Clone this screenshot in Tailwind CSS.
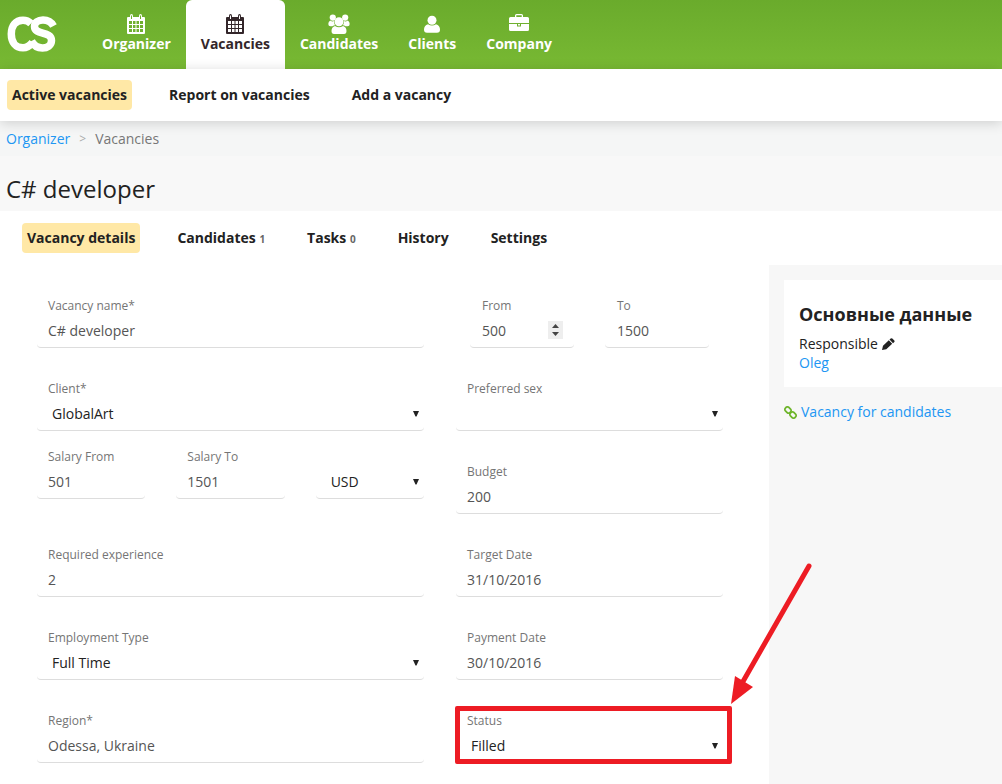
<!DOCTYPE html>
<html lang="en">
<head>
<meta charset="utf-8">
<meta name="viewport" content="width=device-width, initial-scale=1">
<title>C# developer</title>
<script src="https://cdn.jsdelivr.net/npm/@tailwindcss/browser@4"></script>
</head>
<body class="flex min-h-screen flex-col bg-white font-['Open_Sans',sans-serif] text-sm text-[#222]">

<svg class="hidden" aria-hidden="true">
  <symbol id="calendar" viewBox="0 0 18 20">
    <path fill="currentColor" fill-rule="evenodd" d="M1 3H3V2Q3 0 4.500 0T6 2V3h6V2Q12 0 13.500 0T15 2V3h2q1 0 1 1V19q0 1-1 1H1q-1 0-1-1V4Q0 3 1 3ZM4 1.500V5H5V1.500ZM13 1.500V5h1V1.500ZM2 7h3v3H2ZM6 7h2.500v3H6ZM9.500 7H12v3H9.500ZM13 7h3v3H13ZM2 11h3v3H2ZM6 11h2.500v3H6ZM9.500 11H12v3H9.500ZM13 11h3v3H13ZM2 15h3v3H2ZM6 15h2.500v3H6ZM9.500 15H12v3H9.500ZM13 15h3v3H13Z"/>
  </symbol>
  <symbol id="arrow" viewBox="0 0 8 7"><path fill="currentColor" d="M1 1h6L4.500 6.500h-1z"/></symbol>
</svg>

<header class="flex h-[69px] bg-linear-to-b from-[#6aab2c] to-[#78b933] text-white">
  <a href="#" aria-label="CS home" class="flex w-[87px] shrink-0 items-center pb-0.5 pl-[7px]">
    <svg class="h-9 w-[50px]" viewBox="0 0 50 36" fill="none" stroke="currentColor" stroke-width="7.500" aria-hidden="true">
      <path d="M24 7.500C21.500 5 19 4.200 16 4.200C8.500 4.200 4.300 10 4.300 18S8.500 31.800 16 31.800C20.500 31.800 23 29.500 25.500 26.500"/>
      <path d="M46.500 10C44 5.500 40 4 36 4C31 4 27.500 6.500 27.500 10.500C27.500 19.500 44.500 14.500 44.500 24.500C44.500 29.500 40 32 35.500 32C30 32 26.500 29 24.500 25"/>
    </svg>
  </a>
  <nav aria-label="Main" class="flex font-bold">
    <a href="#" class="flex flex-col items-center px-[15px] pt-[14px]"><svg class="h-5 w-[18px]"><use href="#calendar"/></svg><span class="leading-5">Organizer</span></a>
    <a href="#" aria-current="page" class="flex flex-col items-center rounded-t-md bg-white px-[15px] pt-[14px] text-[#33262a]"><svg class="h-5 w-[18px]"><use href="#calendar"/></svg><span class="leading-5">Vacancies</span></a>
    <a href="#" class="flex flex-col items-center px-[15px] pt-[14px]">
      <svg class="h-5 w-[22px]" viewBox="0 0 22 20" fill="currentColor" aria-hidden="true"><circle cx="4.800" cy="3.600" r="3.100"/><circle cx="17.200" cy="3.600" r="3.100"/><path d="M2.200 6.500Q4.500 8 6 7Q6 10 7.300 11.300Q5.500 11.500 4.500 12.300H2.500Q.3 12.300.3 10Q.3 7.500 2.200 6.500ZM19.800 6.500Q17.500 8 16 7Q16 10 14.700 11.300Q16.500 11.500 17.500 12.300H19.500Q21.700 12.300 21.700 10Q21.700 7.500 19.800 6.500Z"/><circle cx="11" cy="7.800" r="4.500"/><path d="M7 12Q11 14.500 15 12Q18.500 13 18.500 17Q18.500 20 16 20H6Q3.500 20 3.500 17Q3.500 13 7 12Z"/></svg>
      <span class="leading-5">Candidates</span></a>
    <a href="#" class="flex flex-col items-center px-[15px] pt-[14px]">
      <svg class="h-5 w-4" viewBox="0 0 16 20" fill="currentColor" aria-hidden="true"><circle cx="8" cy="6.300" r="4.500"/><path d="M4 10.200Q8 13 12 10.200Q16 11.500 16 15.500Q16 18.700 13 18.700H3Q0 18.700 0 15.500Q0 11.500 4 10.200Z"/></svg>
      <span class="leading-5">Clients</span></a>
    <a href="#" class="flex flex-col items-center px-[15px] pt-[14px]">
      <svg class="h-5 w-5" viewBox="0 0 20 20" fill="currentColor" aria-hidden="true"><path fill-rule="evenodd" d="M6 3V1.500Q6 0 7.500 0h5Q14 0 14 1.500V3h4.500Q20 3 20 4.500V9H0V4.500Q0 3 1.500 3ZM7.300 3h5.400V1.300H7.300ZM0 10h8v2.500h4V10h8v5.500q0 1.500-1.500 1.500h-17Q0 17 0 15.500ZM9 10h2v1.500H9Z"/></svg>
      <span class="leading-5">Company</span></a>
  </nav>
</header>

<nav aria-label="Vacancies" class="relative flex h-[52px] items-center gap-8 bg-white px-[7px] font-bold shadow-[0_2px_12px_rgba(0,0,0,0.16)]">
  <a href="#" aria-current="page" class="rounded bg-[#ffe8a6] px-[5px] py-[5px] leading-5">Active vacancies</a>
  <a href="#" class="px-[5px] leading-5">Report on vacancies</a>
  <a href="#" class="px-[5px] leading-5">Add a vacancy</a>
</nav>

<nav aria-label="Breadcrumb" class="flex h-[35px] items-center gap-[9px] bg-[#f5f6f6] px-[6px] text-[#777]">
  <a href="#" class="text-[#2196f3]">Organizer</a><span class="text-xs text-[#aaa]">&gt;</span><span>Vacancies</span>
</nav>
<div class="bg-[#f8f8f8] px-[6px] pt-[17px] pb-[6px]"><h1 class="text-2xl leading-8">C# developer</h1></div>

<nav aria-label="Vacancy" class="flex items-center gap-8 px-[22px] py-3 font-bold">
  <a href="#" aria-current="page" class="rounded bg-[#ffe8a6] px-[5px] py-[5px] leading-5">Vacancy details</a>
  <a href="#" class="px-[5px] leading-5">Candidates <span class="text-[10px] text-[#666]">1</span></a>
  <a href="#" class="px-[5px] leading-5">Tasks <span class="text-[10px] text-[#666]">0</span></a>
  <a href="#" class="px-[5px] leading-5">History</a>
  <a href="#" class="px-[5px] leading-5">Settings</a>
</nav>

<div class="relative flex grow">
  <main class="grow pr-[46px] pl-[37px]">
    <form class="grid grid-cols-[387fr_267fr] gap-x-8">
      <div>
        <div class="mt-[33px]"><label for="name" class="block px-[11px] text-xs leading-4 text-[#757575]">Vacancy name*</label>
          <input id="name" value="C# developer" class="block h-[34px] w-full rounded-b border-b border-[#ddd] px-[11px] text-[#555]"></div>
        <div class="mt-[33px]"><label for="client" class="block px-[11px] text-xs leading-4 text-[#757575]">Client*</label>
          <div class="relative"><select id="client" class="block h-[34px] w-full appearance-none rounded-b border-b border-[#ddd] px-[15px] text-[#222]"><option>GlobalArt</option></select><svg class="pointer-events-none absolute top-[13px] right-1 h-[7px] w-2"><use href="#arrow"/></svg></div></div>
        <div class="mt-[18px] mb-12 grid grid-cols-3 items-end gap-x-[31px]">
          <div><label for="sfrom" class="block px-[11px] text-xs leading-4 text-[#757575]">Salary From</label>
            <input id="sfrom" value="501" class="block h-[34px] w-full rounded-b border-b border-[#ddd] px-[11px] text-[#555]"></div>
          <div><label for="sto" class="block px-[11px] text-xs leading-4 text-[#757575]">Salary To</label>
            <input id="sto" value="1501" class="block h-[34px] w-full rounded-b border-b border-[#ddd] px-[11px] text-[#555]"></div>
          <div class="relative"><select aria-label="Currency" class="block h-[34px] w-full appearance-none rounded-b border-b border-[#ddd] px-[15px] text-[#222]"><option>USD</option></select><svg class="pointer-events-none absolute top-[13px] right-1 h-[7px] w-2"><use href="#arrow"/></svg></div>
        </div>
        <div><label for="exp" class="block px-[11px] text-xs leading-4 text-[#757575]">Required experience</label>
          <input id="exp" value="2" class="block h-[34px] w-full rounded-b border-b border-[#ddd] px-[11px] text-[#555]"></div>
        <div class="mt-[33px]"><label for="etype" class="block px-[11px] text-xs leading-4 text-[#757575]">Employment Type</label>
          <div class="relative"><select id="etype" class="block h-[34px] w-full appearance-none rounded-b border-b border-[#ddd] px-[15px] text-[#222]"><option>Full Time</option></select><svg class="pointer-events-none absolute top-[13px] right-1 h-[7px] w-2"><use href="#arrow"/></svg></div></div>
        <div class="mt-[33px]"><label for="region" class="block px-[11px] text-xs leading-4 text-[#757575]">Region*</label>
          <input id="region" value="Odessa, Ukraine" class="block h-[34px] w-full rounded-b border-b border-[#ddd] px-[11px] text-[#555]"></div>
      </div>

      <div>
        <div class="mt-[33px] grid grid-cols-2 gap-x-[31px] px-[14px]">
          <div><label for="from" class="block px-3 text-xs leading-4 text-[#757575]">From</label>
            <div class="relative"><input id="from" inputmode="numeric" value="500" class="block h-[34px] w-full rounded-b border-b border-[#ddd] px-3 text-[#555]">
              <button type="button" aria-label="Change value" class="absolute top-[7px] right-[11px] h-[18px] w-[15px] bg-[#eee] text-[#444]"><svg class="h-[18px] w-[15px]" viewBox="0 0 15 18" fill="currentColor"><path d="M4 7 7.500 3 11 7ZM4 11h7L7.500 15Z"/></svg></button></div></div>
          <div><label for="to" class="block px-3 text-xs leading-4 text-[#757575]">To</label>
            <input id="to" inputmode="numeric" value="1500" class="block h-[34px] w-full rounded-b border-b border-[#ddd] px-3 text-[#555]"></div>
        </div>
        <div class="mt-[33px]"><label for="sex" class="block px-[11px] text-xs leading-4 text-[#757575]">Preferred sex</label>
          <div class="relative"><select id="sex" class="block h-[34px] w-full appearance-none rounded-b border-b border-[#ddd] px-[15px] text-[#222]"><option></option></select><svg class="pointer-events-none absolute top-[13px] right-1 h-[7px] w-2"><use href="#arrow"/></svg></div></div>
        <div class="mt-[33px]"><label for="budget" class="block px-[11px] text-xs leading-4 text-[#757575]">Budget</label>
          <input id="budget" value="200" class="block h-[34px] w-full rounded-b border-b border-[#ddd] px-[11px] text-[#555]"></div>
        <div class="mt-[33px]"><label for="target" class="block px-[11px] text-xs leading-4 text-[#757575]">Target Date</label>
          <input id="target" value="31/10/2016" class="block h-[34px] w-full rounded-b border-b border-[#ddd] px-[11px] text-[#555]"></div>
        <div class="mt-[33px]"><label for="payment" class="block px-[11px] text-xs leading-4 text-[#757575]">Payment Date</label>
          <input id="payment" value="30/10/2016" class="block h-[34px] w-full rounded-b border-b border-[#ddd] px-[11px] text-[#555]"></div>
        <div class="relative mt-[33px]"><label for="status" class="block px-[11px] text-xs leading-4 text-[#757575]">Status</label>
          <div class="relative"><select id="status" class="block h-[34px] w-full appearance-none rounded-b border-b border-[#ddd] px-[15px] text-[#222]"><option>Filled</option></select><svg class="pointer-events-none absolute top-[13px] right-1 h-[7px] w-2"><use href="#arrow"/></svg></div>
          <div class="pointer-events-none absolute -top-[7px] -right-[9px] -bottom-px -left-px rounded-xs border-5 border-[#ed1c24]"></div>
          <svg class="pointer-events-none absolute -right-[90px] bottom-[58px] z-10 h-[144px] w-[82px]" viewBox="0 0 82 144" fill="#ed1c24" aria-hidden="true"><path d="M78 5 10 124" stroke="#ed1c24" stroke-width="5" stroke-linecap="round"/><path d="M0 143 4 115 22 126Z"/></svg>
        </div>
      </div>
    </form>
  </main>

  <aside class="w-[233px] shrink-0 bg-[#f7f7f7] pt-[15px] pl-[15px]">
    <section class="bg-white px-[15px] pt-[22px] pb-[15px]">
      <h2 class="text-lg leading-6 font-bold whitespace-nowrap">Основные данные</h2>
      <div class="mt-2 flex items-center gap-1 leading-[19px]"><span>Responsible</span>
        <button type="button" aria-label="Edit"><svg class="h-3 w-[13px]" viewBox="0 0 13 12" fill="currentColor"><path d="M0 12 1 7.700 6.800 2.200 10.200 5.800 4.300 11.200ZM7.500 1.600 8.700.5Q9.500-.2 10.300.5L12.300 2.500Q13 3.300 12.300 4L11 5.200Z"/></svg></button></div>
      <a href="#" class="block leading-[19px] text-[#2196f3]">Oleg</a>
    </section>
    <a href="#" class="mt-[15px] flex items-center gap-1 leading-5 whitespace-nowrap text-[#2196f3]">
      <svg class="h-[13px] w-[13px] text-[#6fb52c]" viewBox="0 0 13 13" fill="none" stroke="currentColor" stroke-width="1.800" aria-hidden="true"><rect x="-3.200" y="-2.400" width="6.400" height="4.800" rx="2" transform="translate(4 4) rotate(45)"/><rect x="-3.200" y="-2.400" width="6.400" height="4.800" rx="2" transform="translate(9 9) rotate(45)"/></svg>
      <span>Vacancy for candidates</span></a>
  </aside>
</div>
</body>
</html>
